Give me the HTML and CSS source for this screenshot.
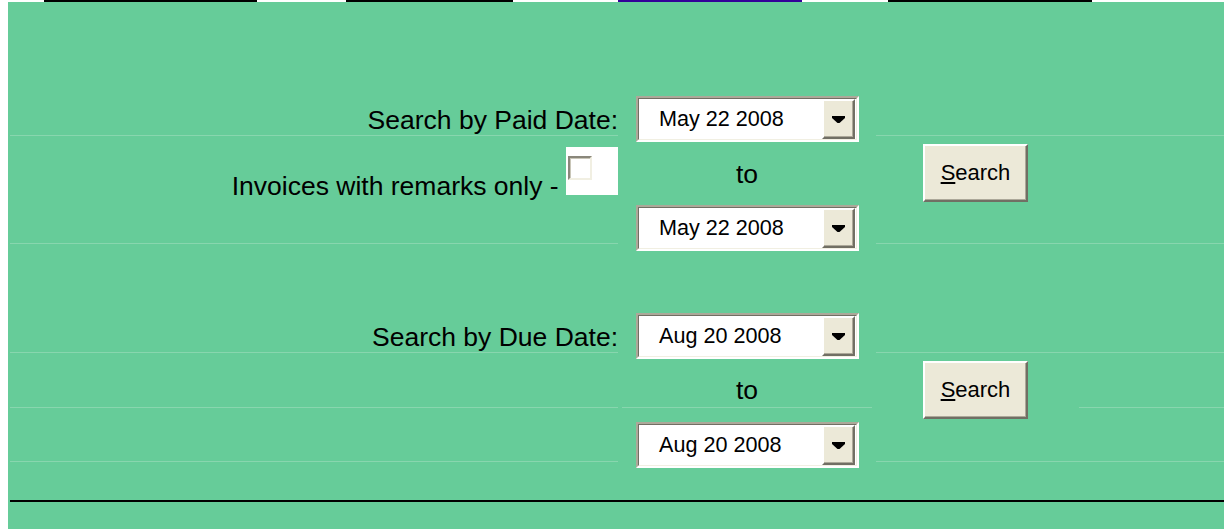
FILE: index.html
```html
<!DOCTYPE html>
<html lang="en">
<head>
<meta charset="utf-8">
<title>Invoice Search</title>
<link rel="stylesheet" href="styles.css">
</head>
<body>
  <div class="tabs">
    <span class="tab tab-1"></span>
    <span class="tab tab-2"></span>
    <span class="tab tab-3 tab-active"></span>
    <span class="tab tab-4"></span>
  </div>

  <main class="panel">
    <form class="search-form">
      <!-- labels column -->
      <div class="col col-labels">
        <div class="cell h1 cell-bottom"><span class="label">Search by Paid Date:</span></div>
        <div class="cell h2 cell-inline"><span class="label">Invoices with remarks only - </span><span class="check-wrap"><span class="check"></span></span></div>
        <div class="cell h3 cell-bottom"><span class="label">Search by Due Date:</span></div>
        <div class="cell h4"></div>
        <div class="cell h5"></div>
      </div>

      <!-- date pickers column -->
      <div class="col col-dates">
        <div class="select s-first">
          <div class="select-field">
            <span class="select-value">May 22 2008</span>
            <span class="select-btn"><svg width="13" height="7" viewBox="0 0 13 7"><polygon points="0,0 13,0 13,2 7.5,7 5.5,7 0,2" fill="#000"/></svg></span>
          </div>
        </div>
        <div class="to">to</div>
        <div class="select">
          <div class="select-field">
            <span class="select-value">May 22 2008</span>
            <span class="select-btn"><svg width="13" height="7" viewBox="0 0 13 7"><polygon points="0,0 13,0 13,2 7.5,7 5.5,7 0,2" fill="#000"/></svg></span>
          </div>
        </div>

        <div class="select s-second">
          <div class="select-field">
            <span class="select-value">Aug 20 2008</span>
            <span class="select-btn"><svg width="13" height="7" viewBox="0 0 13 7"><polygon points="0,0 13,0 13,2 7.5,7 5.5,7 0,2" fill="#000"/></svg></span>
          </div>
        </div>
        <div class="to to-ruled">to</div>
        <div class="select">
          <div class="select-field">
            <span class="select-value">Aug 20 2008</span>
            <span class="select-btn"><svg width="13" height="7" viewBox="0 0 13 7"><polygon points="0,0 13,0 13,2 7.5,7 5.5,7 0,2" fill="#000"/></svg></span>
          </div>
        </div>
      </div>

      <!-- actions column -->
      <div class="col col-actions">
        <div class="cell h1"></div>
        <div class="cell h2 cell-btn"><button type="button" class="btn"><u>S</u>earch</button></div>
        <div class="cell h3"></div>
        <div class="cell h4 cell-split">
          <div class="cell-btn"><button type="button" class="btn"><u>S</u>earch</button></div>
          <div class="cell-rest"></div>
        </div>
        <div class="cell h5"></div>
      </div>
    </form>
    <div class="rule"></div>
  </main>
</body>
</html>
```

FILE: styles.css
```css
* {
  box-sizing: border-box;
}

html, body {
  margin: 0;
  background: #fff;
}

body {
  font-family: "Liberation Sans", Arial, sans-serif;
  color: #000;
}

/* tab strip along the top edge */
.tabs {
  display: flex;
  height: 2px;
  padding-left: 44px;
}

.tab {
  display: block;
  height: 2px;
  background: #000;
}

.tab-1 { width: 213px; }
.tab-2 { width: 167px; margin-left: 89px; }
.tab-3 { width: 184px; margin-left: 105px; }
.tab-4 { width: 204px; margin-left: 86px; }

.tab-active {
  background: #330099;
}

/* green work area */
.panel {
  margin-left: 8px;
  min-height: 527px;
  background: #66cc99;
  padding-left: 2px;
  overflow: hidden;
}

.search-form {
  display: flex;
  align-items: flex-start;
  gap: 4px;
  margin: 0;
}

.col {
  display: flex;
  flex-direction: column;
}

.col-labels {
  width: 608px;
}

.col-dates {
  width: 250px;
}

.col-actions {
  flex: 1;
}

.cell {
  border-bottom: 1px solid #88d6ae;
}

.h1 { height: 134px; }
.h2 { height: 108px; }
.h3 { height: 109px; }
.h4 { height: 55px; }
.h5 { height: 54px; }

.label {
  font-size: 26.5px;
  line-height: 30px;
  white-space: pre;
}

.cell-bottom {
  display: flex;
  align-items: flex-end;
  justify-content: flex-end;
}

.cell-inline {
  text-align: right;
  padding-top: 11px;
  line-height: 30px;
}

/* white box holding the remarks checkbox */
.check-wrap {
  display: inline-block;
  width: 52px;
  height: 48px;
  background: #fff;
  overflow: hidden;
  vertical-align: baseline;
}

.check {
  display: block;
  width: 24px;
  height: 24px;
  margin: 9px 0 0 2px;
  background: #fff;
  border: 2px solid;
  border-color: #8a877b #f1efe2 #f1efe2 #8a877b;
  box-shadow: inset 1px 1px 0 #c9c6b8;
}

/* date drop-downs */
.select {
  display: flex;
  width: 223px;
  height: 46px;
  margin-left: 14px;
  background: #fff;
  border: 2px solid;
  border-color: #aca899 #fff #fff #aca899;
}

.s-first {
  margin-top: 94px;
}

.s-second {
  margin-top: 62px;
}

.select-field {
  flex: 1;
  display: flex;
  align-items: center;
  padding: 0 1px 0 20px;
  border: 1px solid;
  border-color: #716f64 #f1efe2 #f1efe2 #716f64;
}

.select-value {
  flex: 1;
  font-size: 21.6px;
  line-height: 26px;
}

.select-btn {
  display: flex;
  align-items: center;
  justify-content: center;
  width: 33px;
  height: 40px;
  background: #ece9d8;
  border: 2px solid;
  border-color: #fff #716f64 #716f64 #fff;
  box-shadow: inset -1px -1px 0 #aca899;
}

.select-btn svg {
  display: block;
}

.to {
  height: 63px;
  display: flex;
  align-items: center;
  justify-content: center;
  font-size: 26.5px;
  line-height: 30px;
}

.to-ruled {
  height: 49px;
  display: block;
  text-align: center;
  padding-top: 16px;
  margin-bottom: 14px;
  border-bottom: 1px solid #88d6ae;
}

/* search buttons */
.cell-btn {
  padding: 8px 0 0 47px;
}

.cell-split {
  display: flex;
  border-bottom: 0;
}

.cell-split .cell-btn {
  width: 201px;
}

.cell-rest {
  flex: 1;
  margin-left: 2px;
  border-bottom: 1px solid #88d6ae;
}

.btn {
  display: block;
  width: 105px;
  height: 58px;
  padding: 0;
  margin: 0;
  font-family: "Liberation Sans", Arial, sans-serif;
  font-size: 22px;
  color: #000;
  background: #ece9d8;
  border: 2px solid;
  border-color: #fff #716f64 #716f64 #fff;
  box-shadow: inset -1px -1px 0 #aca899;
  cursor: pointer;
}

.rule {
  height: 2px;
  margin-top: 32px;
  background: #000;
}
```
